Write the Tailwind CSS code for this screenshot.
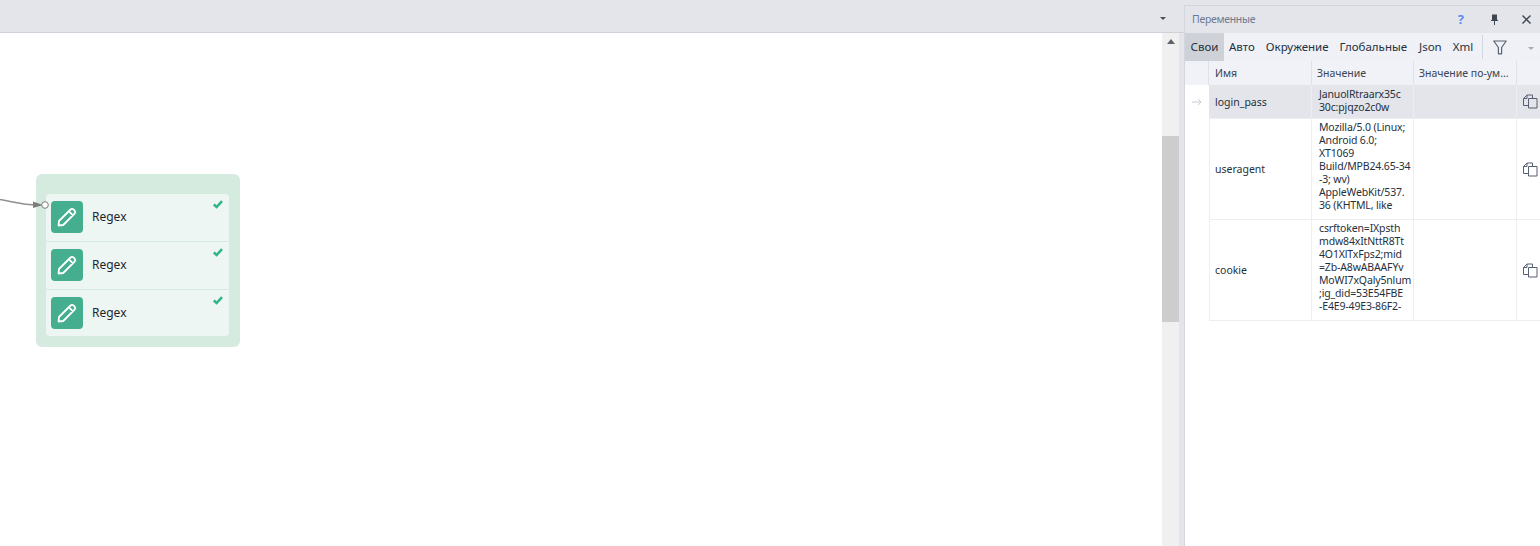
<!DOCTYPE html>
<html lang="en">

<head>
  <meta charset="UTF-8" />
  <title>Переменные</title>
  <script src="https://cdn.jsdelivr.net/npm/@tailwindcss/browser@4"></script>
</head>

<body class="w-[1540px] h-[546px] overflow-hidden font-['Noto_Sans','Open_Sans',sans-serif] text-[11.5px] text-[#26303c]">
<div class="flex h-full">

  <!-- left: project canvas -->
  <div class="flex flex-col w-[1184px] bg-[#e3e5ea]">
    <div class="flex items-center justify-end h-[33px] shrink-0 border-b border-[#cfd2d8] pr-[18px]">
      <span class="w-0 h-0 border-x-[3px] border-x-transparent border-t-[3px] border-t-[#4b4f57] mt-[4px]"></span>
    </div>
    <div class="flex flex-1 mr-[5px]">
      <div class="relative flex-1 bg-white">
        <!-- action group -->
        <div class="absolute left-[36px] top-[141px] w-[204px] h-[173px] rounded-[6px] bg-[#d5ebdf] pt-[20px] pl-[10px] pr-[11px]">
          <div class="rounded-[4px] bg-[#edf6f2] divide-y divide-[#d2ebe0]">
            <div class="relative flex items-start h-[48px] pl-[5px] pt-[7px]">
              <span class="flex items-center justify-center w-[32px] h-[32px] rounded-[4px] bg-[#44ae8e]">
                <svg width="22" height="22" viewBox="0 0 22 22" fill="none" stroke="#fff" stroke-width="1.8" stroke-linejoin="round"><path d="M2.5 19.5 L3 15 L14.5 3.5 Q16 2.2 17.5 3.5 L18.7 4.7 Q19.8 6 18.7 7.5 L7.2 19 Z M12.8 5.2 L17 9.3" /></svg>
              </span>
              <span class="flex items-center h-[32px] ml-[9px] text-[12px] text-[#1d2530]">Regex</span>
              <svg class="absolute right-[6px] top-[6px]" width="10" height="9" viewBox="0 0 10 9" fill="none" stroke="#2fb58c" stroke-width="2.5"><path d="M0.8 4.5 L3.6 7 L9 1.2" /></svg>
            </div>
            <div class="relative flex items-start h-[48px] pl-[5px] pt-[7px]">
              <span class="flex items-center justify-center w-[32px] h-[32px] rounded-[4px] bg-[#44ae8e]">
                <svg width="22" height="22" viewBox="0 0 22 22" fill="none" stroke="#fff" stroke-width="1.8" stroke-linejoin="round"><path d="M2.5 19.5 L3 15 L14.5 3.5 Q16 2.2 17.5 3.5 L18.7 4.7 Q19.8 6 18.7 7.5 L7.2 19 Z M12.8 5.2 L17 9.3" /></svg>
              </span>
              <span class="flex items-center h-[32px] ml-[9px] text-[12px] text-[#1d2530]">Regex</span>
              <svg class="absolute right-[6px] top-[6px]" width="10" height="9" viewBox="0 0 10 9" fill="none" stroke="#2fb58c" stroke-width="2.5"><path d="M0.8 4.5 L3.6 7 L9 1.2" /></svg>
            </div>
            <div class="relative flex items-start h-[46px] pl-[5px] pt-[7px]">
              <span class="flex items-center justify-center w-[32px] h-[32px] rounded-[4px] bg-[#44ae8e]">
                <svg width="22" height="22" viewBox="0 0 22 22" fill="none" stroke="#fff" stroke-width="1.8" stroke-linejoin="round"><path d="M2.5 19.5 L3 15 L14.5 3.5 Q16 2.2 17.5 3.5 L18.7 4.7 Q19.8 6 18.7 7.5 L7.2 19 Z M12.8 5.2 L17 9.3" /></svg>
              </span>
              <span class="flex items-center h-[32px] ml-[9px] text-[12px] text-[#1d2530]">Regex</span>
              <svg class="absolute right-[6px] top-[6px]" width="10" height="9" viewBox="0 0 10 9" fill="none" stroke="#2fb58c" stroke-width="2.5"><path d="M0.8 4.5 L3.6 7 L9 1.2" /></svg>
            </div>
          </div>
        </div>

        <!-- link into the group -->
        <svg class="absolute left-0 top-[157px]" width="50" height="30" viewBox="0 0 50 30">
          <path d="M0 9.5 C14 12 24 15 38 15" fill="none" stroke="#8f8f8f" stroke-width="1.4" />
          <path d="M33 11.5 L43 15 L33 18 Z" fill="#7d7d7d" />
          <circle cx="45" cy="15" r="3.3" fill="#fff" stroke="#7d7d7d" />
        </svg>
      </div>

      <!-- scrollbar -->
      <div class="flex flex-col w-[17px] bg-[#f0f0f0]">
        <div class="flex justify-center pt-[6px] h-[103px]">
          <span class="w-0 h-0 border-x-[4px] border-x-transparent border-b-[5px] border-b-[#5f6368]"></span>
        </div>
        <div class="h-[186px] bg-[#cdcdcd]"></div>
      </div>
    </div>
  </div>

  <!-- right: variables panel -->
  <div class="flex flex-col flex-1 bg-[#e3e5ea] pt-[5px]">
    <div class="flex flex-col flex-1 border-l border-t border-[#d3d6dc] bg-white">
      <div class="flex items-center h-[27px] pl-[7px] bg-[#e3e5ea] text-[#6d7a93] text-[10.5px]">
        <span class="tracking-[-0.3px]">Переменные</span>
        <span class="ml-auto mr-[26px] text-[13px] font-bold text-[#5b8def]">?</span>
        <svg class="mr-[23px]" width="9" height="11" viewBox="0 0 9 11" fill="#3f4650"><path d="M2 0.5 H7 V5.5 L8.5 7 H5 V11 H4 V7 H0.5 L2 5.5 Z" /></svg>
        <svg class="mr-[9px]" width="9" height="9" viewBox="0 0 9 9" fill="none" stroke="#3f4650" stroke-width="1.4"><path d="M0.5 0.5 L8.5 8.5 M8.5 0.5 L0.5 8.5" /></svg>
      </div>

      <div class="flex items-center h-[28px] bg-[#eff1f6] text-[11.5px]">
        <span class="flex items-center justify-center w-[39px] h-full bg-[#ced2d8]">Свои</span>
        <span class="ml-[5px]">Авто</span>
        <span class="ml-[11px]">Окружение</span>
        <span class="ml-[11px]">Глобальные</span>
        <span class="ml-[12px]">Json</span>
        <span class="ml-[11px]">Xml</span>
        <span class="ml-[9px] w-px h-[24px] bg-[#d3d6dc]"></span>
        <svg class="ml-[10px]" width="14" height="15" viewBox="0 0 14 15" fill="none" stroke="#59626e" stroke-width="1.2" stroke-linejoin="round"><path d="M0.8 1 H13.2 L8.6 7.5 V13.8 H5.4 V7.5 Z" /></svg>
        <span class="ml-[21px] w-0 h-0 border-x-[3px] border-x-transparent border-t-[3px] border-t-[#a5a9b1] mt-[2px]"></span>
      </div>

      <div class="grid grid-cols-[24px_103px_102px_103px_1fr] h-[24px] bg-[#f0f2f7] text-[10.5px] text-[#3a4452]">
        <div class="border-r border-[#dfe1e6]"></div>
        <div class="flex items-center pl-[6px] pt-[1px] border-r border-[#dfe1e6]">Имя</div>
        <div class="flex items-center pl-[5px] pt-[1px] border-r border-[#dfe1e6]">Значение</div>
        <div class="flex items-center pl-[5px] pt-[1px] border-r border-[#dfe1e6] whitespace-nowrap">Значение по-ум...</div>
        <div></div>
      </div>

      <div class="grid grid-cols-[24px_103px_102px_103px_1fr] h-[34px] text-[10.5px] leading-[13px]">
        <div class="flex items-center justify-center">
          <svg width="10" height="8" viewBox="0 0 10 8" fill="none" stroke="#c9ccd2"><path d="M0 4 H9 M6 1 L9 4 L6 7" /></svg>
        </div>
        <div class="flex items-center pl-[6px] pt-[1px] bg-[#e3e5ea] border-r border-b border-[#eceef2]">login_pass</div>
        <div class="pl-[7px] pt-[3px] bg-[#e3e5ea] border-r border-b border-[#eceef2] whitespace-nowrap tracking-[-0.15px]">JanuolRtraarx35c<br />30c:pjqzo2c0w</div>
        <div class="bg-[#e3e5ea] border-r border-b border-[#eceef2]"></div>
        <div class="flex items-center pl-[6px] bg-[#e3e5ea] border-b border-[#eceef2]">
          <svg width="15" height="15" viewBox="0 0 15 15" fill="none" stroke="#566070"><path d="M5 11.5 H0.5 V4.5 L4 1 H9.5 V4.5 M4 1 V4.5 H0.5 M5.5 4.5 H14 V14 H5.5 Z" /></svg>
        </div>
      </div>

      <div class="grid grid-cols-[24px_103px_102px_103px_1fr] h-[101px] text-[10.5px] leading-[13px]">
        <div></div>
        <div class="flex items-center pl-[5px] border-l border-r border-b border-[#eceef2]">useragent</div>
        <div class="pl-[7px] pt-[2px] border-r border-b border-[#eceef2] whitespace-nowrap tracking-[-0.15px]">Mozilla/5.0 (Linux;<br />Android 6.0;<br />XT1069<br />Build/MPB24.65-34<br />-3; wv)<br />AppleWebKit/537.<br />36 (KHTML, like</div>
        <div class="border-r border-b border-[#eceef2]"></div>
        <div class="flex items-center pl-[6px] border-b border-[#eceef2]">
          <svg width="15" height="15" viewBox="0 0 15 15" fill="none" stroke="#566070"><path d="M5 11.5 H0.5 V4.5 L4 1 H9.5 V4.5 M4 1 V4.5 H0.5 M5.5 4.5 H14 V14 H5.5 Z" /></svg>
        </div>
      </div>

      <div class="grid grid-cols-[24px_103px_102px_103px_1fr] h-[101px] text-[10.5px] leading-[13px]">
        <div></div>
        <div class="flex items-center pl-[5px] border-l border-r border-b border-[#eceef2]">cookie</div>
        <div class="pl-[7px] pt-[2px] border-r border-b border-[#eceef2] whitespace-nowrap tracking-[-0.15px]">csrftoken=IXpsth<br />mdw84xItNttR8Tt<br />4O1XlTxFps2;mid<br />=Zb-A8wABAAFYv<br />MoWI7xQaly5nlum<br />;ig_did=53E54FBE<br />-E4E9-49E3-86F2-</div>
        <div class="border-r border-b border-[#eceef2]"></div>
        <div class="flex items-center pl-[6px] border-b border-[#eceef2]">
          <svg width="15" height="15" viewBox="0 0 15 15" fill="none" stroke="#566070"><path d="M5 11.5 H0.5 V4.5 L4 1 H9.5 V4.5 M4 1 V4.5 H0.5 M5.5 4.5 H14 V14 H5.5 Z" /></svg>
        </div>
      </div>
    </div>
  </div>

</div>
</body>

</html>
